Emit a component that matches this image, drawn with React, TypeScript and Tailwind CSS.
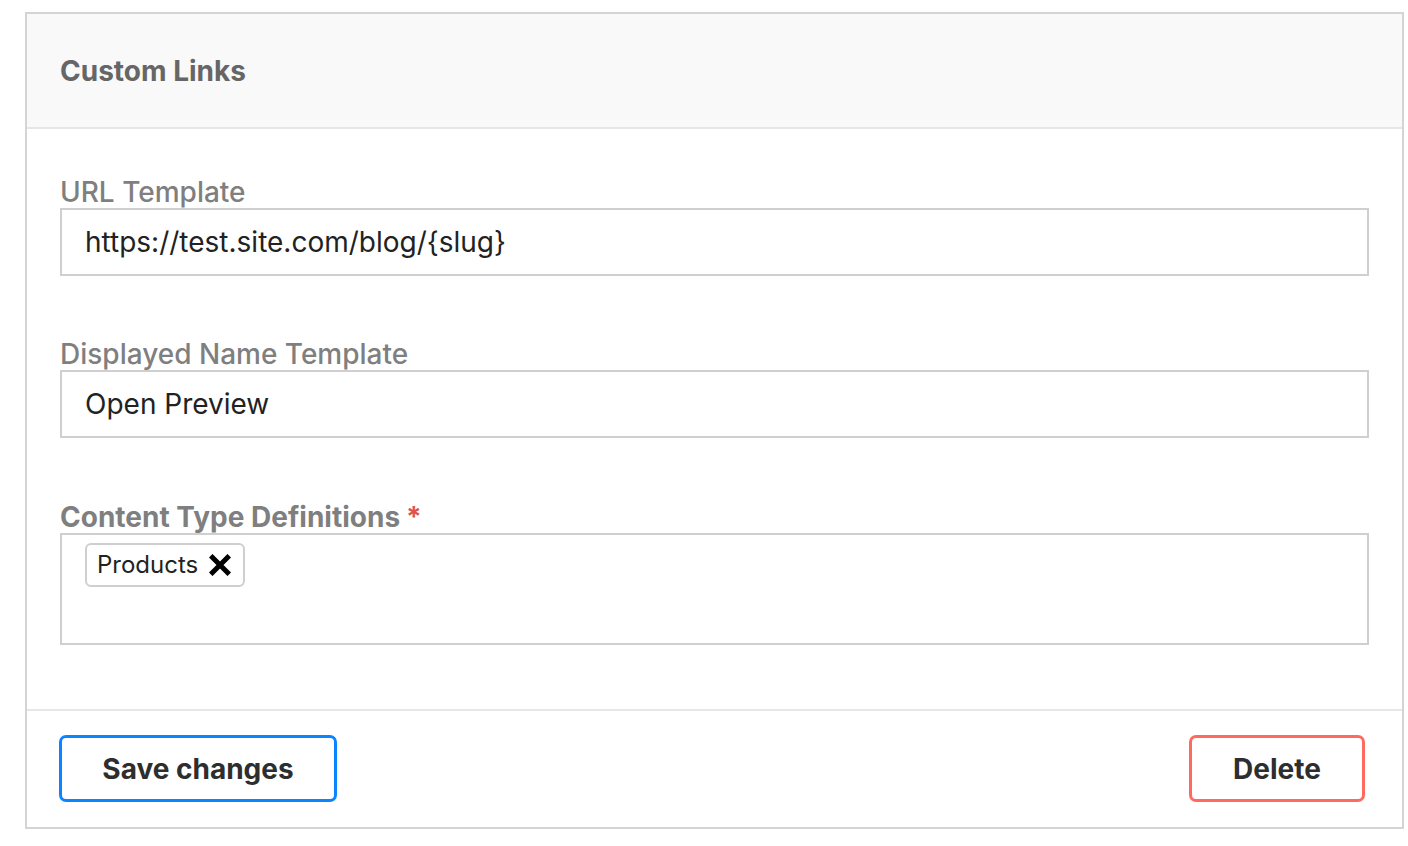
import React from 'react';

const font = { fontFamily: 'Inter, "Noto Sans", sans-serif' };

function Field({ label, required, children }: { label: string; required?: boolean; children: React.ReactNode }) {
  return (
    <div className={required ? 'mt-[1px]' : ''}>
      <div
        className={`text-[28px] leading-[32px] text-[#7f7f7f] ${required ? 'font-bold' : 'font-medium'}`}
      >
        {label}
        {required && <span className="ml-[6px] text-[#e0524a]">*</span>}
      </div>
      {children}
    </div>
  );
}

function TextBox({ value }: { value: string }) {
  return (
    <div className="flex h-[68px] items-center border-2 border-[#cfcfcf] bg-white px-[23px] text-[28px] text-[#222]">
      {value}
    </div>
  );
}

export default function App() {
  return (
    <div className="min-h-[846px] bg-white pl-[25px] pt-[12px]" style={font}>
      <div className="w-[1379px] border-2 border-[#d4d4d4] bg-white">
        <div className="flex h-[115px] items-center border-b-2 border-[#e6e6e6] bg-[#f9f9f9] px-[33px]">
          <h2 className="text-[28px] font-bold text-[#666]">Custom Links</h2>
        </div>

        <div className="flex flex-col gap-[62px] px-[33px] pb-[64px] pt-[47px]">
          <Field label="URL Template">
            <TextBox value="https://test.site.com/blog/{slug}" />
          </Field>
          <Field label="Displayed Name Template">
            <TextBox value="Open Preview" />
          </Field>
          <Field label="Content Type Definitions" required>
            <div className="h-[112px] border-2 border-[#cfcfcf] bg-white px-[23px] pt-[8px]">
              <span className="inline-flex h-[44px] items-center gap-[11px] rounded-[6px] border-2 border-[#cfcfcf] pl-[10px] pr-[12px] text-[24px] text-[#222]">
                Products
                <svg width="22" height="22" viewBox="0 0 22 22">
                  <path d="M3.5 3.5 L18.5 18.5 M18.5 3.5 L3.5 18.5" stroke="#000" strokeWidth="5" strokeLinecap="square" />
                </svg>
              </span>
            </div>
          </Field>
        </div>

        <div className="flex items-center justify-between border-t-2 border-[#e6e6e6] pb-[25px] pl-[32px] pr-[37px] pt-[24px]">
          <button className="h-[67px] w-[278px] rounded-[7px] border-[3px] border-[#0a84ff] bg-white text-[28px] font-bold text-[#2e2e2e]">
            Save changes
          </button>
          <button className="h-[67px] w-[176px] rounded-[7px] border-[3px] border-[#ff6a5f] bg-white text-[28px] font-bold text-[#2e2e2e]">
            Delete
          </button>
        </div>
      </div>
    </div>
  );
}
